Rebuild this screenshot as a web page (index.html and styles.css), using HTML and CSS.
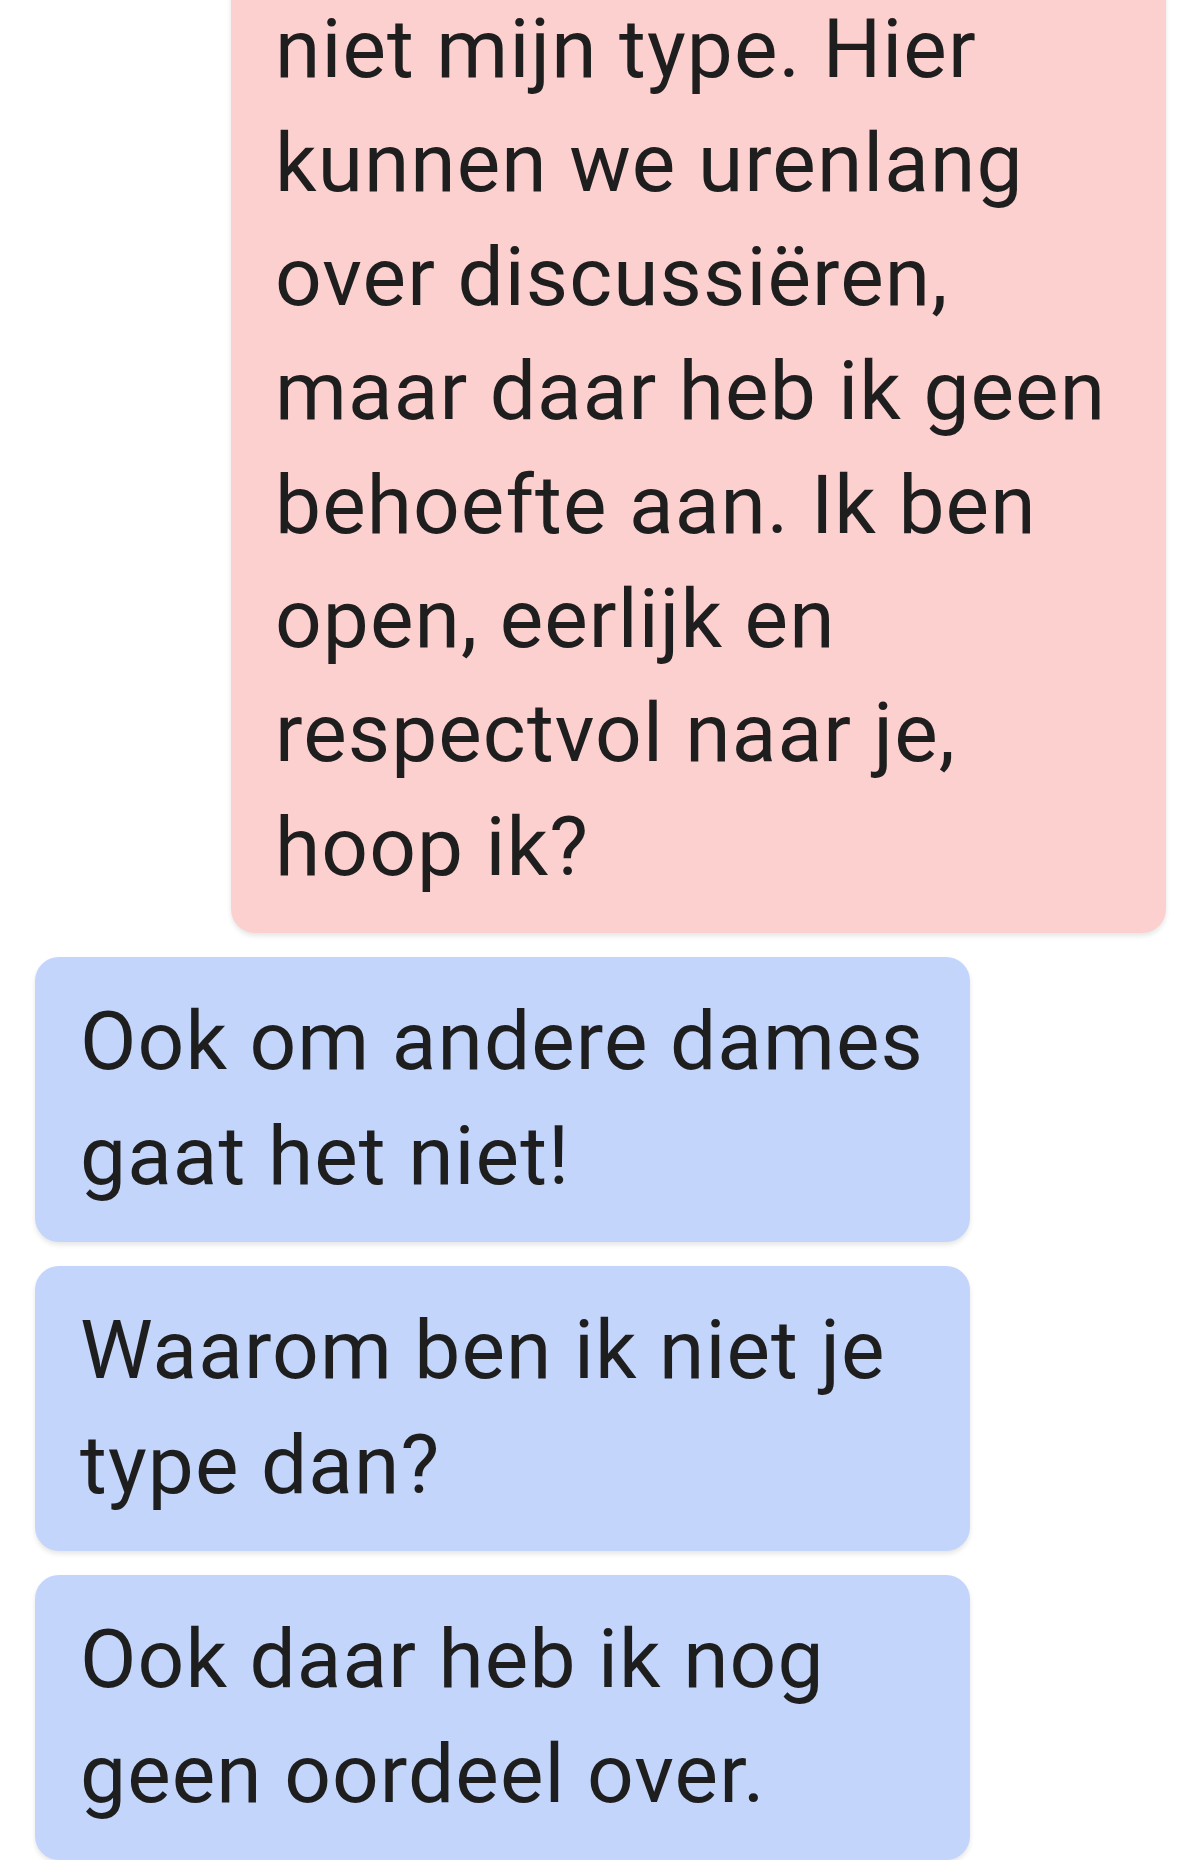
FILE: index.html
```html
<!DOCTYPE html>
<html lang="nl">
<head>
<meta charset="utf-8">
<title>Chat</title>
<link rel="stylesheet" href="styles.css">
</head>
<body>
<main class="chat">
  <div class="bubble sent first">niet mijn type. Hier kunnen we urenlang over discussiëren, maar daar heb ik geen behoefte aan. Ik ben open, eerlijk en respectvol naar je, hoop ik?</div>
  <div class="bubble received">Ook om andere dames gaat het niet!</div>
  <div class="bubble received">Waarom ben ik niet je type dan?</div>
  <div class="bubble received">Ook daar heb ik nog geen oordeel over.</div>
</main>
</body>
</html>
```
FILE: styles.css
```css
html, body {
  margin: 0;
  padding: 0;
  background: #ffffff;
}
body {
  font-family: Roboto, "Noto Sans", sans-serif;
  color: #1e1e1e;
  overflow: hidden;
}
.chat {
  display: flex;
  flex-direction: column;
  gap: 24px;
  padding: 0 34px 0 35px;
}
.bubble {
  box-sizing: border-box;
  width: 935px;
  padding: 28px 40px 29px 45px;
  border-radius: 24px;
  font-size: 82px;
  letter-spacing: 1.1px;
  line-height: 114px;
  box-shadow: 0 3px 5px rgba(0, 0, 0, 0.10);
}
.sent {
  align-self: flex-end;
  background: #fdd0d0;
  padding-left: 44px;
}
.first {
  margin-top: -36px;
}
.received {
  align-self: flex-start;
  background: #c3d5fb;
  line-height: 115px;
  padding-top: 27px;
  padding-bottom: 28px;
}
```
